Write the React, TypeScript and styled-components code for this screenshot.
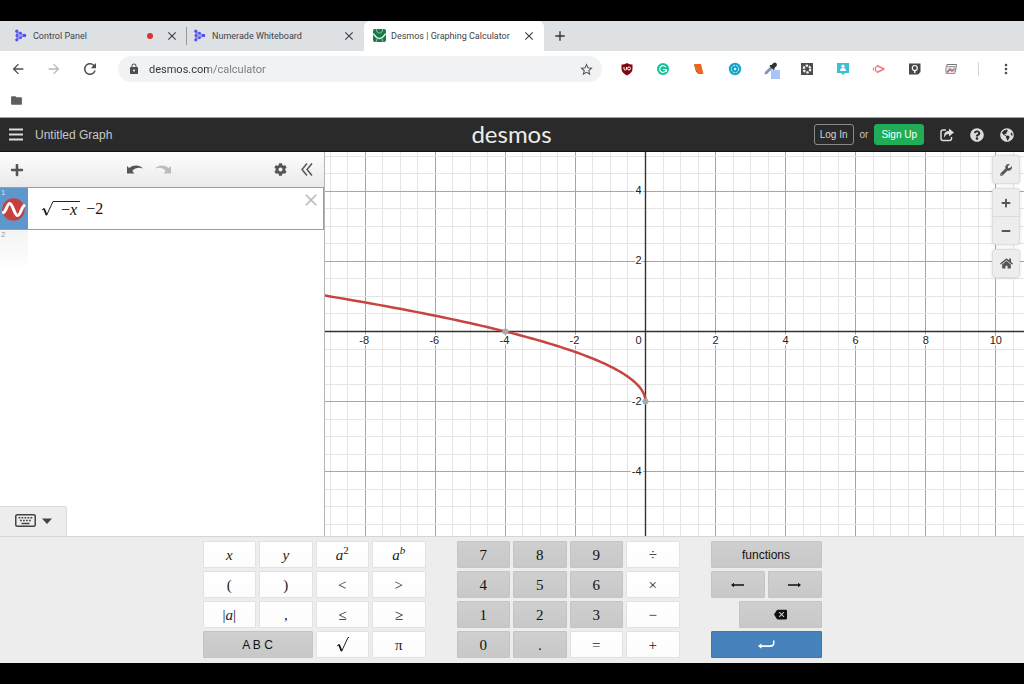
import React from "react";
import styled, { createGlobalStyle, css } from "styled-components";
import {
  MdAdd,
  MdArrowBack,
  MdArrowForward,
  MdBackspace,
  MdClose,
  MdFolder,
  MdLock,
  MdMoreVert,
  MdRefresh,
  MdStarBorder,
} from "react-icons/md";
import { FaCog, FaGlobeAmericas, FaHome, FaMinus, FaPlus, FaQuestionCircle, FaWrench } from "react-icons/fa";

const sans = '"Liberation Sans", Arial, sans-serif';
const serif = '"Liberation Serif", "Times New Roman", serif';
const chromeFont = 'Roboto, "Noto Sans", sans-serif';

const GlobalStyle = createGlobalStyle`
  *, *::before, *::after { box-sizing: border-box; }
  body { margin: 0; background: #000; font-family: ${sans}; }
  button { font: inherit; color: inherit; border: 0; padding: 0; background: none; cursor: pointer; }
  svg { display: block; flex: none; }
`;

const Page = styled.div`
  display: flex;
  flex-direction: column;
  min-height: 100vh;
  padding: 21px 0;
`;

/* ---------- browser ---------- */

const TabStrip = styled.div`
  display: flex;
  align-items: stretch;
  height: 30px;
  background: #dee1e4;
  font-family: ${chromeFont};
  font-size: 9px;
  color: #3f4246;
`;

const Tab = styled.div<{ $active?: boolean; $divided?: boolean }>`
  display: flex;
  align-items: center;
  gap: 5px;
  flex: 0 1 180px;
  padding: 0 8px 1px 9px;
  ${(p) => p.$active && css`
    background: #fff;
    border-radius: 6px 6px 0 0;
  `}
  &:first-child {
    flex-basis: 187px;
    gap: 6px;
    padding-left: 14px;
  }
  ${(p) => p.$divided && css`
    background: linear-gradient(#999, #999) right center / 1px 18px no-repeat;
  `}
  &:nth-child(2) {
    flex-basis: 177px;
    gap: 6px;
    padding-left: 6px;
  }
`;

const TabTitle = styled.span`
  flex: 1;
  white-space: nowrap;
`;

const RecordDot = styled.span`
  width: 6px;
  height: 6px;
  margin-right: 6px;
  border-radius: 50%;
  background: #d93036;
`;

const IconButton = styled.button`
  display: flex;
  align-items: center;
  justify-content: center;
`;

const NewTab = styled(IconButton)`
  width: 32px;
  padding-bottom: 1px;
  color: #333;
`;

const Toolbar = styled.div`
  display: flex;
  align-items: center;
  height: 36px;
  padding: 0 10px;
  background: #fff;
  color: #4b4e52;
`;

const NavButton = styled(IconButton)<{ $dim?: boolean }>`
  width: 16px;
  margin-right: 20px;
  opacity: ${(p) => (p.$dim ? 0.4 : 1)};
`;

const AddressBar = styled.div`
  display: flex;
  align-items: center;
  flex: 1;
  gap: 9px;
  height: 26px;
  padding: 0 8px 0 10px;
  border-radius: 13px;
  background: #f0f2f3;
`;

const AddressInput = styled.input`
  flex: 1;
  min-width: 0;
  padding: 0;
  border: 0;
  outline: 0;
  font: 11px ${chromeFont};
  color: transparent;
  background: linear-gradient(90deg, #303336 60px, #75787b 60px);
  background-clip: text;
  -webkit-background-clip: text;
`;

const Extensions = styled.div`
  display: flex;
  align-items: center;
  gap: 20px;
  margin-left: 17px;
`;

const Divider = styled.span`
  width: 1px;
  height: 14px;
  margin: 0 19px;
  background: #d3d5d8;
`;

const Bookmarks = styled.div`
  display: flex;
  align-items: center;
  height: 31px;
  padding: 0 10px 3px;
  background: #fff;
  border-bottom: 1px solid #a5a5a5;
  color: #5e5e5e;
`;

/* ---------- calculator header ---------- */

const Header = styled.header`
  display: grid;
  grid-template-columns: 1fr auto 1fr;
  align-items: center;
  height: 34px;
  padding: 0 10px 0 9px;
  background: #2a2a2a;
  border-bottom: 1px solid #111;
  color: #dcdcdc;
`;

const HeaderSide = styled.div<{ $end?: boolean }>`
  display: flex;
  align-items: center;
  justify-content: ${(p) => (p.$end ? "flex-end" : "flex-start")};
  gap: ${(p) => (p.$end ? 16 : 12)}px;
`;

const GraphTitle = styled.button`
  font-size: 12px;
  color: #c8c8c8;
`;

const Brand = styled.h1`
  margin: 0;
  padding-bottom: 2px;
  font: 24px/28px Lato, sans-serif;
  color: #ececec;
`;

const Account = styled.div`
  display: flex;
  align-items: center;
  gap: 6px;
  font-size: 10px;
  color: #c4c4c4;
`;

const AccountButton = styled.button<{ $primary?: boolean }>`
  height: 21px;
  padding: 0 ${(p) => (p.$primary ? 6 : 5)}px;
  border: 1px solid ${(p) => (p.$primary ? "#1fae57" : "#8a8a8a")};
  border-radius: 3px;
  background: ${(p) => (p.$primary ? "#1fae57" : "transparent")};
  color: ${(p) => (p.$primary ? "#fff" : "#d4d4d4")};
`;

/* ---------- workspace ---------- */

const Workspace = styled.main`
  display: grid;
  grid-template-columns: 325px 1fr;
  flex: 1;
  min-height: 384px;
  background: #fff;
`;

const Panel = styled.section`
  display: flex;
  flex-direction: column;
  border-right: 1px solid #b4b4b4;
`;

const PanelBar = styled.div`
  display: flex;
  align-items: center;
  justify-content: space-between;
  height: 35px;
  padding: 0 11px 0 10px;
  background: linear-gradient(#fdfdfd, #eaeaea);
  color: #555;
`;

const BarGroup = styled.div<{ $gap: number }>`
  display: flex;
  align-items: center;
  gap: ${(p) => p.$gap}px;
`;

const Expression = styled.div`
  display: flex;
  height: 43px;
  border: 1px solid #7ea6c6;
  border-left: 0;
`;

const Index = styled.div<{ $selected?: boolean }>`
  display: flex;
  flex-direction: column;
  align-items: center;
  width: 28px;
  height: ${(p) => (p.$selected ? "auto" : "36px")};
  background: ${(p) => (p.$selected ? "#5f97cc" : "linear-gradient(#f4f4f4, #fdfdfd)")};
  color: ${(p) => (p.$selected ? "#cfe2f5" : "#999")};
`;

const IndexNumber = styled.span`
  align-self: flex-start;
  padding: 1px;
  font-size: 8px;
  line-height: 8px;
`;

const MathField = styled.div`
  display: flex;
  align-items: center;
  flex: 1;
  padding-left: 13px;
  outline: 0;
  font: 16px/20px ${serif};
  color: #111;
`;

const Radicand = styled.span`
  height: 16px;
  margin-right: 6px;
  padding: 0 3px 0 7px;
  border-top: 1px solid #222;
  line-height: 16px;
`;

const Remove = styled(IconButton)`
  align-self: flex-start;
  width: 24px;
  height: 24px;
  color: #bdbdbd;
`;

const KeypadToggle = styled.button`
  display: flex;
  align-items: center;
  gap: 6px;
  width: 67px;
  height: 30px;
  margin-top: auto;
  padding: 0 0 2px 15px;
  border: 1px solid #dadada;
  border-width: 1px 1px 0 0;
  border-radius: 0 3px 0 0;
  background: #ededed;
  color: #444;
`;

const GraphPane = styled.section`
  position: relative;
  min-width: 0;
  overflow: hidden;
`;

const GraphSvg = styled.svg`
  width: 100%;
  height: 100%;
  font: 11px ${sans};
`;

const GraphTools = styled.div`
  position: absolute;
  top: 3px;
  right: 4px;
  display: flex;
  flex-direction: column;
  gap: 4px;
`;

const ToolGroup = styled.div`
  border: 1px solid #dedede;
  border-radius: 4px;
  background: #ededed;
  box-shadow: 0 0 3px rgba(0, 0, 0, 0.15);
`;

const Tool = styled(IconButton)`
  width: 26px;
  height: 27px;
  color: #555;
  & + & {
    border-top: 1px solid #dadada;
    height: 28px;
  }
`;

/* ---------- keypad ---------- */

const Keypad = styled.section`
  display: flex;
  justify-content: center;
  gap: 31px;
  padding: 4px 0 5px;
  border-top: 1px solid #d5d5d5;
  background: #ededed;
`;

const KeyGroup = styled.div<{ $narrow?: boolean }>`
  display: grid;
  grid-template-columns: repeat(4, 1fr);
  grid-auto-rows: 27px;
  gap: 3px;
  width: ${(p) => (p.$narrow ? 111 : 223)}px;
`;

type Tone = "light" | "dark" | "blue";
const toneStyles = {
  light: css`background: linear-gradient(#fff, #fcfcfc); border-color: #e2e2e2; color: #222;`,
  dark: css`background: linear-gradient(#cfcfcf, #c8c8c8); border-color: #c4c4c4; color: #111;`,
  blue: css`background: #4682bb; border-color: #3f79b0; color: #fff;`,
};

const Key = styled.button<{ $tone: Tone; $span?: number; $from?: number; $words?: boolean }>`
  display: flex;
  align-items: center;
  justify-content: center;
  grid-column: ${(p) => p.$from ?? "auto"} / span ${(p) => p.$span ?? 1};
  border: 1px solid;
  border-radius: 1px;
  font: ${(p) => (p.$words ? `12px ${sans}` : `15px/20px ${serif}`)};
  ${(p) => toneStyles[p.$tone]}
  sup { font-size: 11px; line-height: 0; }
`;

/* ---------- drawings ---------- */

const NumeradeMark = () => (
  <svg width="13" height="13" viewBox="0 0 13 13" aria-hidden="true">
    <path d="M3 3 10.500 6.500 3 10Z" fill="#a9aaf8" stroke="#8d8ef4" strokeWidth="1.500" strokeLinejoin="round" />
    <g fill="#5153e8">
      <circle cx="2.800" cy="2.200" r="1.600" /><circle cx="10.500" cy="6.500" r="1.800" />
      <circle cx="2.800" cy="10.800" r="1.600" /><circle cx="3" cy="6.500" r="1.500" />
      <circle cx="6.500" cy="4.200" r="1.400" /><circle cx="6.500" cy="8.800" r="1.400" />
    </g>
  </svg>
);

const DesmosMark = () => (
  <svg width="13" height="13" viewBox="0 0 13 13" aria-hidden="true">
    <rect width="13" height="13" rx="2" fill="#157a45" />
    <path d="M0 5c2 0 2 4.500 6.500 4.500S11 5 13 5" fill="none" stroke="#e2f5e8" strokeWidth="1.600" />
    <path d="M3.500 0c0 3 1 4 3 4s3-1 3-4M3 13l1.500-4M10 13 8.500 9" fill="none" stroke="#8fcba8" strokeWidth="1" />
  </svg>
);

const HeaderBars = () => (
  <svg width="14" height="13" viewBox="0 0 14 13" aria-hidden="true">
    <path d="M0 1.500h14M0 6.500h14M0 11.500h14" stroke="currentColor" strokeWidth="2" />
  </svg>
);

const ShareIcon = () => (
  <svg width="14" height="14" viewBox="0 0 14 14" aria-hidden="true">
    <path d="M6 2H3Q1 2 1 4v6.500q0 2 2 2h6.500q2 0 2-2V9" fill="none" stroke="currentColor" strokeWidth="1.500" />
    <path d="M9 0.500 14 4.500 9 8.500V6C6.500 6 5.200 7 4.500 9.700 3.200 5.500 5.500 3 9 3Z" fill="currentColor" />
  </svg>
);

const UndoIcon = ({ flip }: { flip?: boolean }) => (
  <svg width="16" height="10" viewBox="0 0 16 10" opacity={flip ? 0.35 : 1} aria-hidden="true">
    <g transform={flip ? "matrix(-1 0 0 1 16 0)" : undefined}>
      <path d="M0 1 2.200 3C6.500-0.500 12.500-0.300 16 3.500 11.500 2 8 3 5.200 6L7.500 8.500H0Z" fill="currentColor" />
    </g>
  </svg>
);

const CollapseIcon = () => (
  <svg width="12" height="13" viewBox="0 0 12 13" aria-hidden="true">
    <path d="M6 0.500 1 6.500l5 6M11 0.500 6 6.500l5 6" fill="none" stroke="currentColor" strokeWidth="1.500" />
  </svg>
);

const CurveBadge = () => (
  <svg width="24" height="23" viewBox="0 0 24 23" aria-hidden="true">
    <circle cx="11.500" cy="11.500" r="11.200" fill="#c7403d" />
    <path d="M1.500 14.500C4 14 5 5.500 7.800 5.500S12.500 17.500 15.500 17.500 19 10.500 22 7.500" fill="none" stroke="#fff" strokeWidth="3" strokeLinecap="round" />
  </svg>
);

const RadicalSign = () => (
  <svg width="13" height="16" viewBox="0 0 13 16" aria-hidden="true">
    <path d="M1 9 3 7.500" fill="none" stroke="#222" strokeWidth="1" />
    <path d="M3 7.500 5.500 14" fill="none" stroke="#111" strokeWidth="1.800" />
    <path d="M5.500 14.500 12 0.500H13" fill="none" stroke="#222" strokeWidth="1" />
  </svg>
);

const KeyboardIcon = () => (
  <svg width="21" height="13" viewBox="0 0 21 13" aria-hidden="true">
    <rect x="0.750" y="0.750" width="19.500" height="11.500" rx="1.500" fill="none" stroke="currentColor" strokeWidth="1.500" />
    <path d="M3.500 3.700h14M5 6.500h11" stroke="currentColor" strokeWidth="1.600" strokeDasharray="1.800 1.200" />
    <path d="M6.500 9.500h8" stroke="currentColor" strokeWidth="1.500" />
  </svg>
);

const ArrowKey = ({ right }: { right?: boolean }) => (
  <svg width="13" height="6" viewBox="0 0 13 6" aria-hidden="true">
    <g transform={right ? "matrix(-1 0 0 1 13 0)" : undefined}>
      <path d="M0 3 3 0.700V2.200H13V3.800H3V5.300Z" fill="currentColor" />
    </g>
  </svg>
);

const EnterKey = () => (
  <svg width="17" height="9" viewBox="0 0 17 9" aria-hidden="true">
    <path d="M0 6 3.500 3.500V5.200H12Q15 5.200 15 3V0.500H16.500V3Q16.500 6.900 12 6.900H3.500V8.700Z" fill="currentColor" />
  </svg>
);

const extensionIcons: { name: string; art: React.ReactNode }[] = [
  { name: "Content blocker", art: <><path d="M8 2C10 3 11.500 3.500 13.500 3.500V8c0 3-2.500 5-5.500 6.500C5 13 2.500 11 2.500 8V3.500C4.500 3.500 6 3 8 2Z" fill="#7d0610" /><path d="M5 6v2q0 1 1.300 1t1.200-1V6M10 6q1.500 0 1.500 1.500T10 9 8.500 7.500 10 6" fill="none" stroke="#fff" /></> },
  { name: "Writing assistant", art: <><circle cx="8" cy="8" r="6" fill="#15c39a" /><path d="M10.800 6.200A3.300 3.300 0 1 0 11 9.500M8 8.500h3.200V11" fill="none" stroke="#fff" strokeWidth="1.200" /></> },
  { name: "Notes", art: <><path d="M3.500 3H10l2.500 10H7Z" fill="#f26322" /><path d="M3.500 3 7 13 5 10.500 3 4Z" fill="#b94310" /></> },
  { name: "Lens", art: <><circle cx="8" cy="8" r="6.200" fill="#16a5c8" /><circle cx="8" cy="8" r="3.700" fill="none" stroke="#c9f3fb" strokeDasharray="2 1" /><circle cx="8" cy="8" r="1.200" fill="#e8fbff" /></> },
  { name: "Colour picker", art: <><path d="M1.500 13.500 2 11 7.500 5.500 9.500 7.500 4 13Z" fill="#7f8fc0" /><path d="M7 4 8.500 4 10.500 2q2-1 3 .5t0 2.500L11.500 7v1.500L10.500 9 6.500 5Z" fill="#30302c" /><rect x="8" y="9" width="9" height="9" fill="#a9c4f8" /></> },
  { name: "Screen capture", art: <><rect x="2" y="2" width="12" height="12" fill="#4c4c4c" /><circle cx="8" cy="8" r="3.300" fill="none" stroke="#f4f4f4" strokeWidth="2.200" strokeDasharray="2.300 1.150" /></> },
  { name: "Classroom", art: <><path d="M2 2h12v10h-4l-2 2-2-2H2Z" fill="#3ebdd6" /><circle cx="8" cy="5.200" r="1.600" fill="#fff" /><path d="M5 10q0-3 3-3t3 3Z" fill="#fff" /></> },
  { name: "Video recorder", art: <><path d="M6 4.500 13 8l-7 3.500" fill="none" stroke="#f2777c" strokeWidth="1.500" strokeLinejoin="round" /><path d="M2.500 6.500v3M4.500 5.500v5M6 4.500v2M6 9.500v2" stroke="#f2777c" strokeWidth="1.200" /></> },
  { name: "Ideas", art: <><path d="M2 2.500h11.500V11L11 13.500H2Z" fill="#484848" /><circle cx="7.800" cy="7" r="2.500" fill="none" stroke="#fff" strokeWidth="1.200" /><path d="M7.800 9v3" stroke="#fff" strokeWidth="1.500" /></> },
  { name: "Screenshots", art: <><path d="M4 3.500h9.500l-1 7H3Z" fill="#fff" stroke="#777" /><path d="M3 5.500h9v7H3Z" fill="#dfe5e5" stroke="#999" /><path d="M4 11.500 7 8l2 2 2-2" fill="none" stroke="#c85d67" strokeWidth="1.500" /></> },
];

/* ---------- graph ---------- */

const WIDTH = 699;
const HEIGHT = 384;
const ORIGIN = { x: 320.5, y: 179.5 };
const UNIT = 35.03;

const snap = (v: number) => Math.floor(v) + 0.5;
const px = (x: number) => ORIGIN.x + x * UNIT;
const py = (y: number) => ORIGIN.y - y * UNIT;
const range = (from: number, to: number, step: number) =>
  Array.from({ length: Math.round((to - from) / step) + 1 }, (_, i) => from + i * step);

const lineColor = (v: number) => (v === 0 ? "#333" : v % 2 === 0 ? "#a6a6a6" : "#e5e5e5");

// Major lines come last so that they lie over the minor ones.
const majorLast = (a: number, b: number) => Number(a % 2 === 0) - Number(b % 2 === 0);

// Sampled evenly in sqrt(-x), which keeps the steep end of the curve smooth.
const curve = range(0, 3.04, 0.04)
  .map((t, i) => `${i ? "L" : "M"}${px(-t * t).toFixed(2)} ${py(t - 2).toFixed(2)}`)
  .join("");

const Graph = () => (
  <GraphSvg viewBox={`0 0 ${WIDTH} ${HEIGHT}`} preserveAspectRatio="xMidYMid slice" role="img" aria-label="Graph paper">
    {range(-9, 10.5, 0.5).sort(majorLast).map((v) => (
      <line key={`v${v}`} x1={snap(px(v))} x2={snap(px(v))} y1="0" y2={HEIGHT} stroke={lineColor(v)} />
    ))}
    {range(-5.5, 5, 0.5).sort(majorLast).map((v) => (
      <line key={`h${v}`} y1={snap(py(v))} y2={snap(py(v))} x1="0" x2={WIDTH} stroke={lineColor(v)} />
    ))}
    <path d={`M${ORIGIN.x} 0V${HEIGHT}M0 ${ORIGIN.y}H${WIDTH}`} stroke="#333" strokeWidth="1.400" />
    <g fill="#222" stroke="#fff" strokeWidth="3" paintOrder="stroke">
      {range(-8, 10, 2).map((v) => (
        <text key={v} x={v === 0 ? px(0) - 7 : px(v) - (v < 0 ? 1 : 0)} y={py(0) + 12} textAnchor="middle">{v}</text>
      ))}
      {[4, 2, -2, -4].map((v) => (
        <text key={v} x={px(0) - 4} y={py(v) + 3} textAnchor="end">{v}</text>
      ))}
    </g>
    <path d={curve} fill="none" stroke="#c74440" strokeWidth="2.500" />
    <circle cx={px(-4)} cy={py(0)} r="3" fill="#aaa" />
    <circle cx={px(0)} cy={py(-2)} r="3" fill="#aaa" />
  </GraphSvg>
);

type KeyDef = { label: React.ReactNode; name?: string; tone?: Tone; span?: number; from?: number; words?: boolean };

const symbolKeys: KeyDef[] = [
  { label: <i>x</i> }, { label: <i>y</i> },
  { label: <span><i>a</i><sup>2</sup></span> }, { label: <span><i>a</i><sup><i>b</i></sup></span> },
  { label: "(" }, { label: ")" }, { label: "<" }, { label: ">" },
  { label: <span>|<i>a</i>|</span> }, { label: "," }, { label: "≤" }, { label: "≥" },
  { label: "A B C", tone: "dark", span: 2, words: true }, { label: <RadicalSign />, name: "Square root" }, { label: "π" },
];

const numberKeys: KeyDef[] = "789÷456×123−0.=+"
  .split("")
  .map((label): KeyDef => ({ label, tone: /[\d.]/.test(label) ? "dark" : "light" }));

const actionKeys: KeyDef[] = [
  { label: "functions", tone: "dark", span: 4, words: true },
  { label: <ArrowKey />, name: "Left", tone: "dark", span: 2 },
  { label: <ArrowKey right />, name: "Right", tone: "dark", span: 2 },
  { label: <MdBackspace size={13} />, name: "Backspace", tone: "dark", span: 3, from: 2 },
  { label: <EnterKey />, name: "Enter", tone: "blue", span: 4, from: 1 },
];

const Keys = ({ keys, narrow }: { keys: KeyDef[]; narrow?: boolean }) => (
  <KeyGroup $narrow={narrow}>
    {keys.map((k, i) => (
      <Key key={i} $tone={k.tone ?? "light"} $span={k.span} $from={k.from} $words={k.words} aria-label={k.name}>
        {k.label}
      </Key>
    ))}
  </KeyGroup>
);

export default function App() {
  return (
    <Page>
      <GlobalStyle />
      <TabStrip>
        <Tab $divided>
          <NumeradeMark />
          <TabTitle>Control Panel</TabTitle>
          <RecordDot />
          <IconButton aria-label="Close Control Panel"><MdClose size={14} /></IconButton>
        </Tab>
        <Tab>
          <NumeradeMark />
          <TabTitle>Numerade Whiteboard</TabTitle>
          <IconButton aria-label="Close Numerade Whiteboard"><MdClose size={14} /></IconButton>
        </Tab>
        <Tab $active>
          <DesmosMark />
          <TabTitle>Desmos | Graphing Calculator</TabTitle>
          <IconButton aria-label="Close Desmos"><MdClose size={14} /></IconButton>
        </Tab>
        <NewTab aria-label="New tab"><MdAdd size={16} /></NewTab>
      </TabStrip>

      <Toolbar>
        <NavButton aria-label="Back"><MdArrowBack size={16} /></NavButton>
        <NavButton aria-label="Forward" $dim><MdArrowForward size={16} /></NavButton>
        <NavButton aria-label="Reload"><MdRefresh size={18} /></NavButton>
        <AddressBar>
          <MdLock size={12} />
          <AddressInput aria-label="Address" defaultValue="desmos.com/calculator" />
          <IconButton aria-label="Bookmark this page"><MdStarBorder size={15} /></IconButton>
        </AddressBar>
        <Extensions>
          {extensionIcons.map((e) => (
            <IconButton key={e.name} aria-label={e.name}>
              <svg width="16" height="16" viewBox="0 0 16 16" overflow="visible" aria-hidden="true">{e.art}</svg>
            </IconButton>
          ))}
        </Extensions>
        <Divider />
        <IconButton aria-label="Menu"><MdMoreVert size={16} /></IconButton>
      </Toolbar>
      <Bookmarks>
        <IconButton aria-label="Bookmarks folder"><MdFolder size={13} /></IconButton>
      </Bookmarks>

      <Header>
        <HeaderSide>
          <IconButton aria-label="Open graphs"><HeaderBars /></IconButton>
          <GraphTitle>Untitled Graph</GraphTitle>
        </HeaderSide>
        <Brand>desmos</Brand>
        <HeaderSide $end>
          <Account>
            <AccountButton>Log In</AccountButton>
            or
            <AccountButton $primary>Sign Up</AccountButton>
          </Account>
          <IconButton aria-label="Share"><ShareIcon /></IconButton>
          <IconButton aria-label="Help"><FaQuestionCircle size={14} /></IconButton>
          <IconButton aria-label="Language"><FaGlobeAmericas size={14} /></IconButton>
        </HeaderSide>
      </Header>

      <Workspace>
        <Panel>
          <PanelBar>
            <IconButton aria-label="Add item"><FaPlus size={14} /></IconButton>
            <BarGroup $gap={12}>
              <IconButton aria-label="Undo"><UndoIcon /></IconButton>
              <IconButton aria-label="Redo"><UndoIcon flip /></IconButton>
            </BarGroup>
            <BarGroup $gap={14}>
              <IconButton aria-label="Settings"><FaCog size={13} /></IconButton>
              <IconButton aria-label="Collapse list"><CollapseIcon /></IconButton>
            </BarGroup>
          </PanelBar>
          <Expression>
            <Index $selected>
              <IndexNumber>1</IndexNumber>
              <CurveBadge />
            </Index>
            <MathField>
              <RadicalSign />
              <Radicand>−<i>x</i></Radicand>
              <span>−2</span>
            </MathField>
            <Remove aria-label="Delete expression"><MdClose size={20} /></Remove>
          </Expression>
          <Index>
            <IndexNumber>2</IndexNumber>
          </Index>
          <KeypadToggle aria-label="Hide keypad">
            <KeyboardIcon />
            <svg width="10" height="6" viewBox="0 0 10 6" aria-hidden="true"><path d="M0 0.500h10L5 6Z" fill="currentColor" /></svg>
          </KeypadToggle>
        </Panel>
        <GraphPane>
          <Graph />
          <GraphTools>
            <ToolGroup><Tool aria-label="Graph settings"><FaWrench size={12} /></Tool></ToolGroup>
            <ToolGroup>
              <Tool aria-label="Zoom in"><FaPlus size={10} /></Tool>
              <Tool aria-label="Zoom out"><FaMinus size={10} /></Tool>
            </ToolGroup>
            <ToolGroup><Tool aria-label="Default view"><FaHome size={13} /></Tool></ToolGroup>
          </GraphTools>
        </GraphPane>
      </Workspace>

      <Keypad>
        <Keys keys={symbolKeys} />
        <Keys keys={numberKeys} />
        <Keys keys={actionKeys} narrow />
      </Keypad>
    </Page>
  );
}
